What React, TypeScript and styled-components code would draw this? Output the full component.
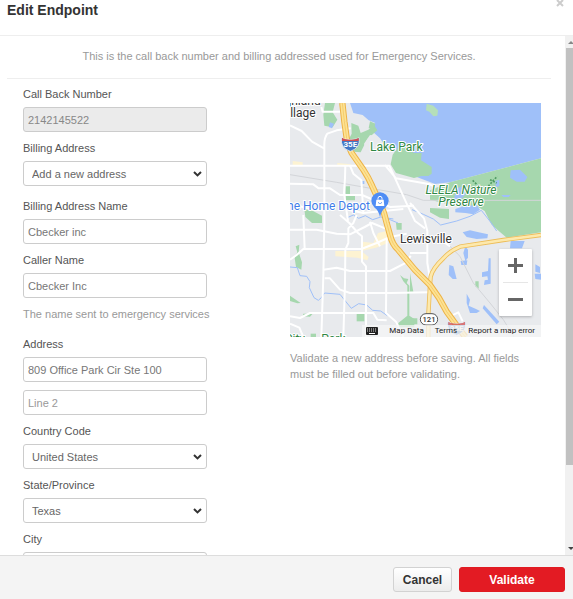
import React, { useState } from "react";
import styled, { createGlobalStyle } from "styled-components";

const GlobalStyle = createGlobalStyle`
  * { box-sizing: border-box; }
  body {
    margin: 0;
    background: #fff;
    font-family: "Liberation Sans", Arial, sans-serif;
    font-size: 11px;
    line-height: 16px;
    color: #555;
  }
  input, select, button { font: inherit; }
`;

const Dialog = styled.div`
  display: flex;
  flex-direction: column;
  height: 100vh;
  overflow: hidden;
`;

const Header = styled.header`
  display: flex;
  justify-content: space-between;
  align-items: flex-start;
  flex: none;
  height: 36px;
  padding: 0 8px 0 7px;
  border-bottom: 1px solid #eee;
`;

const Title = styled.h1`
  margin: 0;
  font-size: 14px;
  line-height: 20px;
  font-weight: bold;
  color: #333;
`;

const CloseButton = styled.button`
  display: flex;
  padding: 0;
  border: 0;
  background: none;
  color: #ccc;
`;

const Main = styled.div`
  display: flex;
  flex: 1;
  min-height: 0;
`;

const Body = styled.main`
  flex: 1;
  min-width: 0;
  overflow: hidden;
  padding: 0 14px 0 7px;
`;

const Intro = styled.p`
  margin: 0;
  padding: 12px 0 14px;
  border-bottom: 1px solid #eee;
  text-align: center;
  color: #999;
`;

const Columns = styled.div`
  display: grid;
  grid-template-columns: 184fr 251fr;
  gap: 83px;
  padding: 7px 10px 16px 16px;
`;

const Form = styled.form`
  display: flex;
  flex-direction: column;
  gap: 8px;
  min-width: 0;
`;

const Field = styled.div<{ $after?: number }>`
  display: flex;
  flex-direction: column;
  margin-bottom: ${(p) => p.$after ?? 0}px;
`;

const Label = styled.label`
  margin-bottom: 5px;
`;

const TextInput = styled.input`
  width: 100%;
  min-width: 0;
  height: 25px;
  padding: 0 4px;
  border: 1px solid #ccc;
  border-radius: 3px;
  outline: 0;
  background: #fff;
  color: #777;
  &::placeholder { color: #999; opacity: 1; }
  &:disabled { background: #ebebeb; color: #888; }
`;

const SelectWrap = styled.div`
  display: grid;
  align-items: center;
  > * { grid-area: 1 / 1; }
  > svg { justify-self: end; margin-right: 5px; pointer-events: none; }
`;

const SelectBox = styled.select`
  appearance: none;
  width: 100%;
  height: 25px;
  padding: 0 20px 0 8px;
  border: 1px solid #ccc;
  border-radius: 3px;
  background: #fff;
  color: #666;
`;

const Hint = styled.p`
  margin: 0;
  color: #999;
`;

const FormHint = styled(Hint)`
  margin-bottom: 6px;
  white-space: nowrap;
`;

const MapColumn = styled.section`
  display: flex;
  flex-direction: column;
  gap: 13px;
  min-width: 0;
  padding-top: 17px;
`;

const MapFrame = styled.div`
  position: relative;
  overflow: hidden;
  line-height: 0;
  > svg { width: 100%; height: auto; }
`;

const ZoomControl = styled.div`
  position: absolute;
  right: 9px;
  bottom: 21px;
  display: flex;
  flex-direction: column;
  width: 33px;
  padding: 0 4px;
  background: #fff;
  border-radius: 1px;
  box-shadow: 0 1px 3px rgba(0, 0, 0, 0.25);
`;

const ZoomButton = styled.button`
  display: grid;
  place-items: center;
  height: 33px;
  padding: 0;
  border: 0;
  background: none;
  color: #666;
  & + & { height: 34px; border-top: 1px solid #e6e6e6; }
`;

const Attribution = styled.div`
  position: absolute;
  right: 0;
  bottom: 0;
  display: flex;
  align-items: center;
  gap: 11px;
  height: 12px;
  padding: 0 6px 0 4px;
  background: rgba(245, 245, 245, 0.75);
  font-family: Roboto, sans-serif;
  font-size: 8px;
  line-height: 12px;
  color: #222;
  white-space: nowrap;
  a { color: inherit; text-decoration: none; }
`;

const Scrollbar = styled.div`
  display: flex;
  flex-direction: column;
  align-items: flex-end;
  flex: none;
  width: 8px;
  overflow: hidden;
  background: #f1f1f1;
  > svg { flex: none; }
`;

const Thumb = styled.div`
  flex: 417;
  width: 7px;
  background: #c1c1c1;
`;

const Track = styled.div`
  flex: 78;
`;

const Footer = styled.footer`
  display: flex;
  justify-content: flex-end;
  gap: 7px;
  flex: none;
  padding: 11px 8px 7px;
  border-top: 1px solid #ddd;
  background: #f4f4f4;
`;

const Button = styled.button<{ $primary?: boolean }>`
  min-width: ${(p) => (p.$primary ? 106 : 59)}px;
  height: 25px;
  padding: 0 8px;
  border: 1px solid ${(p) => (p.$primary ? "#e01b22" : "#d2d2d2")};
  border-radius: 3px;
  background: ${(p) => (p.$primary ? "#e31b23" : "linear-gradient(#fff, #ececec)")};
  color: ${(p) => (p.$primary ? "#fff" : "#333")};
  font-size: 12px;
  font-weight: bold;
`;

function Chevron() {
  return (
    <svg width="9" height="6" viewBox="0 0 9 6" fill="none" stroke="#333" strokeWidth="2" aria-hidden="true">
      <path d="M1 1l3.5 3.4L8 1" />
    </svg>
  );
}

function Input(props: { id: string; label: string; value: string; disabled?: boolean }) {
  const [value, setValue] = useState(props.value);
  return (
    <Field>
      <Label htmlFor={props.id}>{props.label}</Label>
      <TextInput id={props.id} value={value} disabled={props.disabled} onChange={(e) => setValue(e.target.value)} />
    </Field>
  );
}

function Select(props: { id: string; label: string; option: string; after?: number }) {
  return (
    <Field $after={props.after}>
      <Label htmlFor={props.id}>{props.label}</Label>
      <SelectWrap>
        <SelectBox id={props.id}>
          <option>{props.option}</option>
        </SelectBox>
        <Chevron />
      </SelectWrap>
    </Field>
  );
}

const water = "#9fc0f9";
const park = "#a6d7ae";
const interstatePath =
  "M157 0L163 55L170 105Q174 130 185 150L220 200Q236 224 247 250L270 300Q284 330 290 360L300 396Q307 425 325 441L375 501L420 546Q450 585 470 626L510 681L526 702";
const highwayPath = "M753 396L640 411L510 431Q480 443 460 466Q428 496 422 521L420 546L415 636V702";

const MapText = styled.text<{ $color: string }>`
  font-family: Roboto, sans-serif;
  font-size: 36px;
  fill: ${(p) => p.$color};
  stroke: #fff;
  stroke-width: 6px;
  stroke-linejoin: round;
  paint-order: stroke;
`;

function Interstate({ x, y, faded }: { x: number; y: number; faded?: boolean }) {
  return (
    <g transform={`translate(${x} ${y})`} opacity={faded ? 0.75 : 1}>
      <path d="M-26-20L-18-16Q0-12 18-16L26-20Q32 10 0 21Q-32 10-26-20Z" fill="#4277c4" stroke="#fff" strokeWidth="2" />
      <path d="M-25-20L-18-16Q0-12 18-16L25-20V-10H-25Z" fill="#d34f50" />
      <text y="9" textAnchor="middle" fontFamily="Roboto, sans-serif" fontSize="24" fontWeight="700" fill="#fff">
        35E
      </text>
    </g>
  );
}

function CityMap() {
  return (
    <svg viewBox="0 0 753 702" role="img" aria-label="Map of Lewisville">
      <rect width="753" height="702" fill="#e8eaed" />
      {/* lake */}
      <path
        fill={water}
        d="M180 0H753V166L480 238L435 243L390 226L360 214L320 165L292 140L270 106L250 88L238 70L256 60L236 52L218 36L190 30Z"
      />
      {/* parks */}
      <g fill={park}>
        <path d="M105 0H135L128 28L142 50L128 73L103 68L100 35Z" />
        <path d="M184 60L205 68L212 90L235 80L252 66L262 82L232 108L212 148L192 146L175 112L185 92Z" />
        <path d="M240 55L256 62L252 78L236 76Z" />
        <path d="M167 250H180V274H195V292H167Z" />
        <path d="M43 318L65 322L96 338V360H66L46 342Z" />
        <path d="M318 360H335V380H320Z" />
        <path d="M17 430L28 425L26 448L36 478L34 500L18 492L14 465L22 448Z" />
        <path d="M0 578L32 600L22 601L0 594Z" />
        <path d="M40 632L68 632L60 641L38 640Z" />
        <path d="M200 633H223V655H200Z" />
        <path d="M330 516L342 526L355 528L350 540L358 548V638L373 648V673H325V660L352 638V548L340 535Z" />
        <path d="M62 692H78V702H62Z" />
        <path d="M420 315L477 318V348L450 344L420 328Z" />
        <path d="M556 535H566V557L556 550Z" />
        <path d="M360 510L370 566H360ZM360 646H382V664H360Z" />
      </g>
      <path fill="#e8eaed" d="M222 122L240 96L262 100L276 118L296 138L318 150L318 228L298 185L240 180Z" />
      <path fill={park} d="M308 155L330 125L372 150L395 150L393 172L425 192V212L415 219H395L372 225L318 210L302 184Z" />
      <path fill="#b5dfba" d="M410 2L430 8L444 22L442 38L430 40L418 26L408 22Z" />
      {/* nature preserve */}
      <path
        fill={park}
        d="M420 262L480 238L753 166V388L650 404L622 380L604 364L584 324L560 310H500L420 290Z"
      />
      <g fill={water}>
        <path d="M662 202L690 200L712 222L704 236L680 236L660 224Z" />
        <path d="M498 256L520 250L526 274L512 290H492Z" />
        <path d="M520 310L560 306L570 320L550 334L526 330L496 328V318Z" />
        <path d="M616 234L628 230V250L618 252ZM634 276L662 276L656 282L640 282Z" />
        <path d="M518 388L540 382L566 388L594 394L592 406L560 408L530 402Z" />
        <path d="M526 430L534 440V464L526 474L520 450ZM512 474L532 472L530 486L514 486Z" />
        <path d="M478 486L490 490L500 528H488L476 516Z" />
        <path d="M596 466H602V542L582 546L584 532L594 530L592 520L576 522V508L594 504Z" />
        <path d="M530 572L540 590L536 608L558 618L570 624L560 630L540 630L530 600Z" />
        <path d="M582 606L628 656L620 664L578 616Z" />
        <path d="M662 414H704L696 436H660ZM736 484L750 492V510L736 506ZM734 512H753V530L736 528Z" />
        <path d="M217 234H223V243H217ZM120 58L132 62L126 76L116 72Z" />
      </g>
      <g fill="none" stroke={water} strokeWidth="3">
        <path d="M0 492L22 494L30 518L50 520L60 536L58 554L72 584L85 592L94 584L104 570L150 574L166 594L184 616L206 602L230 606L248 622L272 624L292 638" />
        <path d="M172 344L190 336L206 346L226 338L248 350L272 342L310 348M284 340L300 350L324 360" />
        <path d="M366 320L400 334L430 348L452 366L500 354L540 340L574 322L604 360L620 384" />
      </g>
      <g fill="none" stroke="#4f9b62" strokeWidth="5" strokeDasharray="6 4">
        <path d="M548 232L562 246L575 252M595 250L612 230L622 220M600 230L620 240" />
      </g>
      {/* built-up areas */}
      <g fill="#fdf3d2">
        <path d="M8 174L38 178V186L8 188ZM142 180L182 184V188H142ZM136 444L218 444V416L250 420L264 390L290 384L294 420L258 434L214 444L236 462L232 472L202 464L136 460Z" />
      </g>
      {/* streets */}
      <g fill="none" stroke="#d3d5d9" strokeWidth="3">
        <path d="M0 215L140 238L350 275L400 292H753M246 245L300 298M450 400L510 460L550 540L600 600L640 650L672 702" />
      </g>
      <g fill="none" stroke="#fff" strokeWidth="6" strokeLinejoin="round">
        <path d="M0 67L35 84L66 116L102 136M150 26H98L94 12M182 76L140 82L112 92Q102 105 103 130V360L100 520L94 702" />
        <path d="M0 188L298 188L350 302L375 354L405 376M285 186L318 226L420 244L435 252" />
        <path d="M0 242L70 244L86 256H120L150 276H216L300 312L372 308" />
        <path d="M166 188L165 225L162 270L174 354M180 188L190 212L214 232L220 330M0 302L70 320L104 322M174 320L220 330L340 318" />
        <path d="M0 380H80L140 392L180 394L224 372L246 360L300 382M40 336L44 438M150 336L178 360L204 390L216 400V476L228 490V702M200 336L190 360L175 376V420L166 440L165 540L160 702" />
        <path d="M0 470L20 456L40 438H214L260 420L300 402L350 392M240 356L250 390L270 430M100 500L140 494L180 504H300L350 478L362 458" />
        <path d="M104 526H120L150 560L180 570H300L420 568M290 404L288 630L318 656L340 702M0 640L30 645L60 630H250L262 650L290 652M0 662L28 674L40 702" />
        <path d="M360 300L402 346L412 384V480L422 540M360 450L412 450M440 400L480 430M480 640L505 628L518 655" />
      </g>
      {/* highways */}
      <g fill="none" strokeLinejoin="round">
        <path d={highwayPath} stroke="#edbd58" strokeWidth="13" />
        <path d={highwayPath} stroke="#fde9ad" strokeWidth="8" />
        <path d={interstatePath} stroke="#edb347" strokeWidth="19" />
        <path d={interstatePath} stroke="#fde293" strokeWidth="13" />
        <path d={interstatePath} stroke="#f2c25c" strokeWidth="2" />
      </g>
      <Interstate x={181} y={124} />
      <Interstate x={500} y={676} faded />
      <rect x="391" y="632" width="52" height="34" rx="17" fill="#fff" stroke="#555" strokeWidth="3" />
      <text x="417" y="657" textAnchor="middle" fontFamily="Roboto, sans-serif" fontSize="23" fontWeight="500" fill="#333">
        121
      </text>
      {/* store pin */}
      <path d="M270 342Q266 322 254 314Q244 304 244 294A26 26 0 0 1 296 294Q296 304 286 314Q274 322 270 342Z" fill="#4f8df5" />
      <path d="M259 290H281L283 309H257Z" fill="#fff" />
      <path d="M264 290V286A6 6 0 0 1 276 286V290" fill="none" stroke="#fff" strokeWidth="3" />
      <path d="M265 297A5 5 0 0 0 275 297" fill="none" stroke="#4f8df5" strokeWidth="2" />
      {/* place names */}
      <MapText $color="#333" x="92" y="6" textAnchor="end">Highland</MapText>
      <MapText $color="#333" x="77" y="42" textAnchor="end">Village</MapText>
      <MapText $color="#2f8745" x="240" y="143">Lake Park</MapText>
      <MapText $color="#3f7de8" x="240" y="320" textAnchor="end">The Home Depot</MapText>
      <MapText $color="#2f8745" x="513" y="273" textAnchor="middle" fontStyle="italic">LLELA Nature</MapText>
      <MapText $color="#2f8745" x="513" y="309" textAnchor="middle" fontStyle="italic">Preserve</MapText>
      <MapText $color="#333" x="330" y="420">Lewisville</MapText>
      <MapText $color="#2f8745" x="-16" y="721">City</MapText>
      <MapText $color="#2f8745" x="94" y="721">Park</MapText>
    </svg>
  );
}

export default function App() {
  return (
    <Dialog role="dialog" aria-labelledby="dialog-title">
      <GlobalStyle />
      <Header>
        <Title id="dialog-title">Edit Endpoint</Title>
        <CloseButton aria-label="Close">
          <svg width="10" height="7" viewBox="0 0 10 7" fill="none" stroke="currentColor" strokeWidth="2">
            <path d="M2 0l6 6M8 0l-6 6" />
          </svg>
        </CloseButton>
      </Header>
      <Main>
        <Body>
          <Intro>This is the call back number and billing addressed used for Emergency Services.</Intro>
          <Columns>
            <Form>
              <Input id="callback" label="Call Back Number" value="2142145522" disabled />
              <Select id="billing" label="Billing Address" option="Add a new address" after={4} />
              <Input id="billing-name" label="Billing Address Name" value="Cbecker inc" />
              <Input id="caller" label="Caller Name" value="Cbecker Inc" />
              <FormHint>The name sent to emergency services</FormHint>
              <Input id="address" label="Address" value="809 Office Park Cir Ste 100" />
              <TextInput aria-label="Address line 2" placeholder="Line 2" />
              <Select id="country" label="Country Code" option="United States" />
              <Select id="state" label="State/Province" option="Texas" />
              <Input id="city" label="City" value="" />
            </Form>
            <MapColumn>
              <MapFrame>
                <CityMap />
                <ZoomControl>
                  <ZoomButton aria-label="Zoom in">
                    <svg width="15" height="15" viewBox="0 0 15 15" fill="currentColor">
                      <path d="M6 0h3v6h6v3H9v6H6V9H0V6h6z" />
                    </svg>
                  </ZoomButton>
                  <ZoomButton aria-label="Zoom out">
                    <svg width="15" height="3" viewBox="0 0 15 3" fill="currentColor">
                      <path d="M0 0h15v3H0z" />
                    </svg>
                  </ZoomButton>
                </ZoomControl>
                <Attribution>
                  <svg width="12" height="8" viewBox="0 0 12 8" aria-hidden="true">
                    <rect width="12" height="8" rx="1" fill="#222" />
                    <path d="M1 2h10M1 4h10" stroke="#ddd" strokeDasharray="1 1" />
                    <path d="M3 6.5h6" stroke="#fff" />
                  </svg>
                  <span>Map Data</span>
                  <a href="#terms">Terms</a>
                  <a href="#report">Report a map error</a>
                </Attribution>
              </MapFrame>
              <Hint>Validate a new address before saving. All fields must be filled out before validating.</Hint>
            </MapColumn>
          </Columns>
        </Body>
        <Scrollbar aria-hidden="true">
          <svg width="7" height="12" viewBox="0 0 7 12">
            <path d="M2 8L5 5L8 8Z" fill="#888" />
          </svg>
          <Thumb />
          <Track />
          <svg width="7" height="12" viewBox="0 0 7 12">
            <path d="M2 4L5 7L8 4Z" fill="#444" />
          </svg>
        </Scrollbar>
      </Main>
      <Footer>
        <Button type="button">Cancel</Button>
        <Button type="button" $primary>Validate</Button>
      </Footer>
    </Dialog>
  );
}
